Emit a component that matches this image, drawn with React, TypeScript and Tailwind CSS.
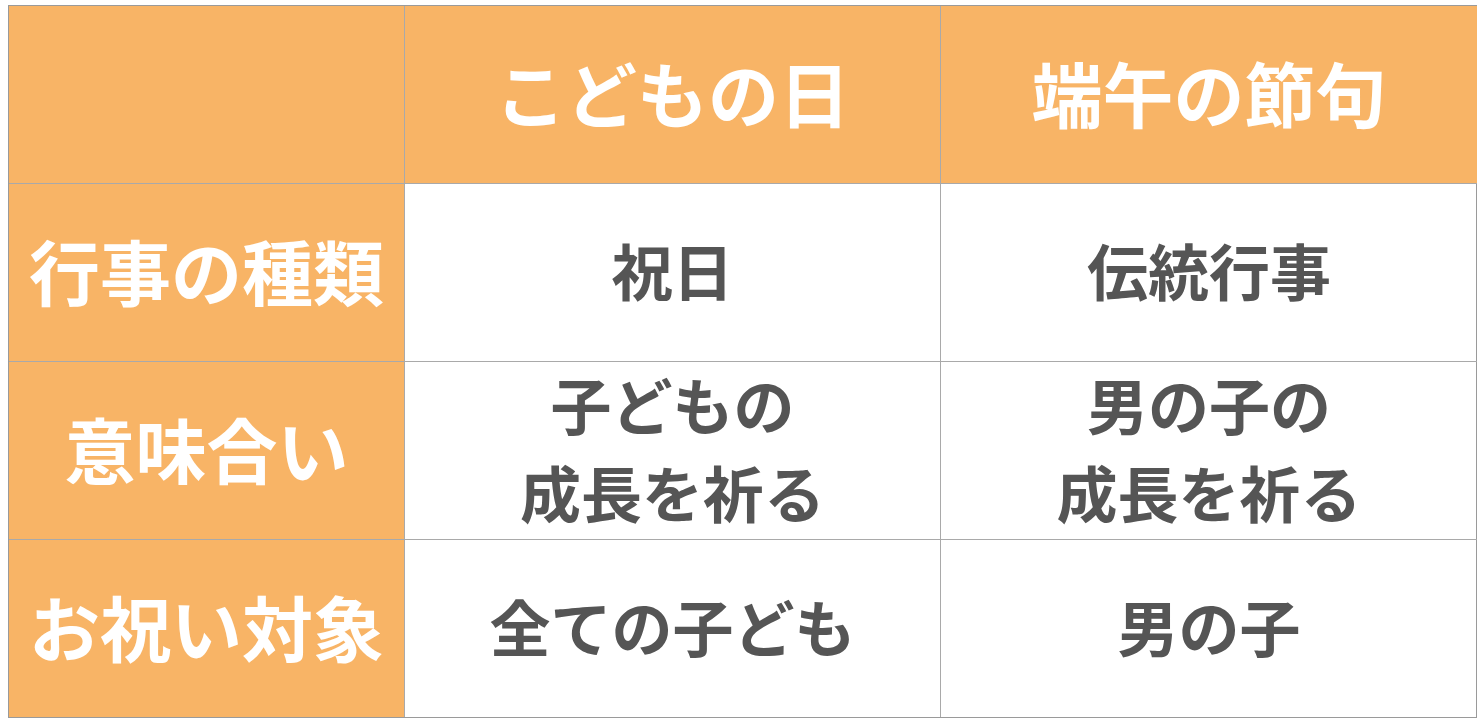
const rows: { label: string; a: string[]; b: string[] }[] = [
  { label: "行事の種類", a: ["祝日"], b: ["伝統行事"] },
  { label: "意味合い", a: ["子どもの", "成長を祈る"], b: ["男の子の", "成長を祈る"] },
  { label: "お祝い対象", a: ["全ての子ども"], b: ["男の子"] },
];

export default function App() {
  return (
    <div
      className="w-[1484px] h-[720px] bg-white pt-[5px] pl-[8px]"
      style={{ fontFamily: '"Noto Sans CJK JP", sans-serif' }}
    >
      <div className="grid grid-cols-[396px_536px_536px] grid-rows-[178px_178px_178px_177px] w-[1469px] border border-[#9a9a9a] font-bold">
        <div className="bg-[#f8b466] border-r border-b border-[#a9a9a9]" />
        <div className="bg-[#f8b466] border-r border-b border-[#a9a9a9] flex items-center justify-center pb-[6px] text-white text-[71px]">
          こどもの日
        </div>
        <div className="bg-[#f8b466] border-b border-[#a9a9a9] flex items-center justify-center pb-[6px] text-white text-[71px]">
          端午の節句
        </div>
        {rows.map((r, i) => (
          <div key={i} className="contents">
            <div
              className={`bg-[#f8b466] border-r border-[#a9a9a9] flex items-center justify-center pb-[6px] text-white text-[71px] ${i < rows.length - 1 ? "border-b" : ""}`}
            >
              {r.label}
            </div>
            <div
              className={`border-r border-[#a9a9a9] flex flex-col items-center justify-center pb-[6px] text-[#555555] text-[61px] leading-[88px] ${i < rows.length - 1 ? "border-b" : ""}`}
            >
              {r.a.map((t) => (
                <span key={t}>{t}</span>
              ))}
            </div>
            <div
              className={`border-[#a9a9a9] flex flex-col items-center justify-center pb-[6px] text-[#555555] text-[61px] leading-[88px] ${i < rows.length - 1 ? "border-b" : ""}`}
            >
              {r.b.map((t) => (
                <span key={t}>{t}</span>
              ))}
            </div>
          </div>
        ))}
      </div>
    </div>
  );
}
